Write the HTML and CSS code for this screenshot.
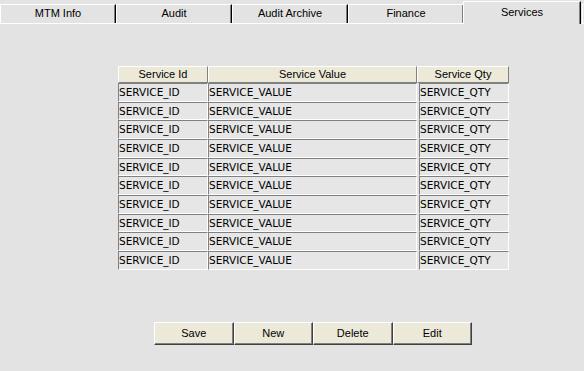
FILE: index.html
```html
<!DOCTYPE html>
<html lang="en">
<head>
  <meta charset="UTF-8" />
  <title>Services</title>
  <link rel="stylesheet" href="styles.css">
</head>
<body>
  <div class="tabs">
    <div class="tab">MTM Info</div>
    <div class="tab">Audit</div>
    <div class="tab">Audit Archive</div>
    <div class="tab">Finance</div>
    <div class="tab selected">Services</div>
    <div class="tab stub"></div>
  </div>
  <main class="panel">
    <div class="grid">
      <div class="head">Service Id</div>
      <div class="head">Service Value</div>
      <div class="head">Service Qty</div>

      <div class="cell">SERVICE_ID</div><div class="cell">SERVICE_VALUE</div><div class="cell qty">SERVICE_QTY</div>
      <div class="cell">SERVICE_ID</div><div class="cell">SERVICE_VALUE</div><div class="cell qty">SERVICE_QTY</div>
      <div class="cell">SERVICE_ID</div><div class="cell">SERVICE_VALUE</div><div class="cell qty">SERVICE_QTY</div>
      <div class="cell">SERVICE_ID</div><div class="cell">SERVICE_VALUE</div><div class="cell qty">SERVICE_QTY</div>
      <div class="cell">SERVICE_ID</div><div class="cell">SERVICE_VALUE</div><div class="cell qty">SERVICE_QTY</div>
      <div class="cell">SERVICE_ID</div><div class="cell">SERVICE_VALUE</div><div class="cell qty">SERVICE_QTY</div>
      <div class="cell">SERVICE_ID</div><div class="cell">SERVICE_VALUE</div><div class="cell qty">SERVICE_QTY</div>
      <div class="cell">SERVICE_ID</div><div class="cell">SERVICE_VALUE</div><div class="cell qty">SERVICE_QTY</div>
      <div class="cell">SERVICE_ID</div><div class="cell">SERVICE_VALUE</div><div class="cell qty">SERVICE_QTY</div>
      <div class="cell">SERVICE_ID</div><div class="cell">SERVICE_VALUE</div><div class="cell qty">SERVICE_QTY</div>
    </div>
    <div class="buttons">
      <button>Save</button>
      <button>New</button>
      <button>Delete</button>
      <button>Edit</button>
    </div>
  </main>
</body>
</html>
```

FILE: styles.css
```css
body {
  margin: 0;
  width: 584px;
  height: 371px;
  overflow: hidden;
  background: #e3e3e3;
  font-family: 'Liberation Sans', Arial, sans-serif;
  font-size: 11px;
  color: #000;
}
.tabs {
  display: flex;
  align-items: flex-end;
  height: 23px;
}
.tab {
  box-sizing: border-box;
  width: 116px;
  height: 19px;
  line-height: 17px;
  text-align: center;
  border-top: 1px solid #fff;
  border-left: 1px solid #fff;
  border-right: 1px solid #000;
  box-shadow: inset -1px 0 0 #808080;
}
.tab.selected {
  position: relative;
  width: 118px;
  height: 23px;
  line-height: 21px;
  margin: 0 1px -1px -1px;
  background: #e3e3e3;
}
.tab.stub {
  flex: 1;
  border-right: none;
  box-shadow: none;
}
.panel {
  border-top: 1px solid #fff;
  display: flex;
  flex-direction: column;
  padding: 42px 0 0 118px;
}
.grid {
  display: grid;
  grid-template-columns: 90px 209px 92px;
  grid-template-rows: 17px;
  grid-auto-rows: 18.67px;
  width: 391px;
}
.head {
  box-sizing: border-box;
  background: #ece9d8;
  text-align: center;
  line-height: 15px;
  border-top: 1px solid #fff;
  border-left: 1px solid #fff;
  border-right: 1px solid #808080;
  border-bottom: 1px solid #808080;
}
.cell {
  box-sizing: border-box;
  font-family: 'DejaVu Sans', Tahoma, sans-serif;
  font-size: 10.5px;
  line-height: 15px;
  padding-top: 1px;
  background: #e6e6e6;
  border-top: 1px solid #808080;
  border-left: 1px solid #808080;
  border-bottom: 1px solid #fff;
  border-right: 1px solid #fff;
  white-space: nowrap;
  overflow: hidden;
}
.cell.qty {
  margin-left: 2px;
}
.buttons {
  display: flex;
  margin: 52px 0 0 36px;
  width: 318px;
}
button {
  flex: 1;
  height: 23px;
  background: #ece9d8;
  font-family: 'Liberation Sans', Arial, sans-serif;
  font-size: 11px;
  color: #000;
  padding: 0;
  border-top: 1px solid #fff;
  border-left: 1px solid #fff;
  border-right: 1px solid #404040;
  border-bottom: 1px solid #404040;
  box-shadow: inset -1px -1px 0 #808080;
}
```
